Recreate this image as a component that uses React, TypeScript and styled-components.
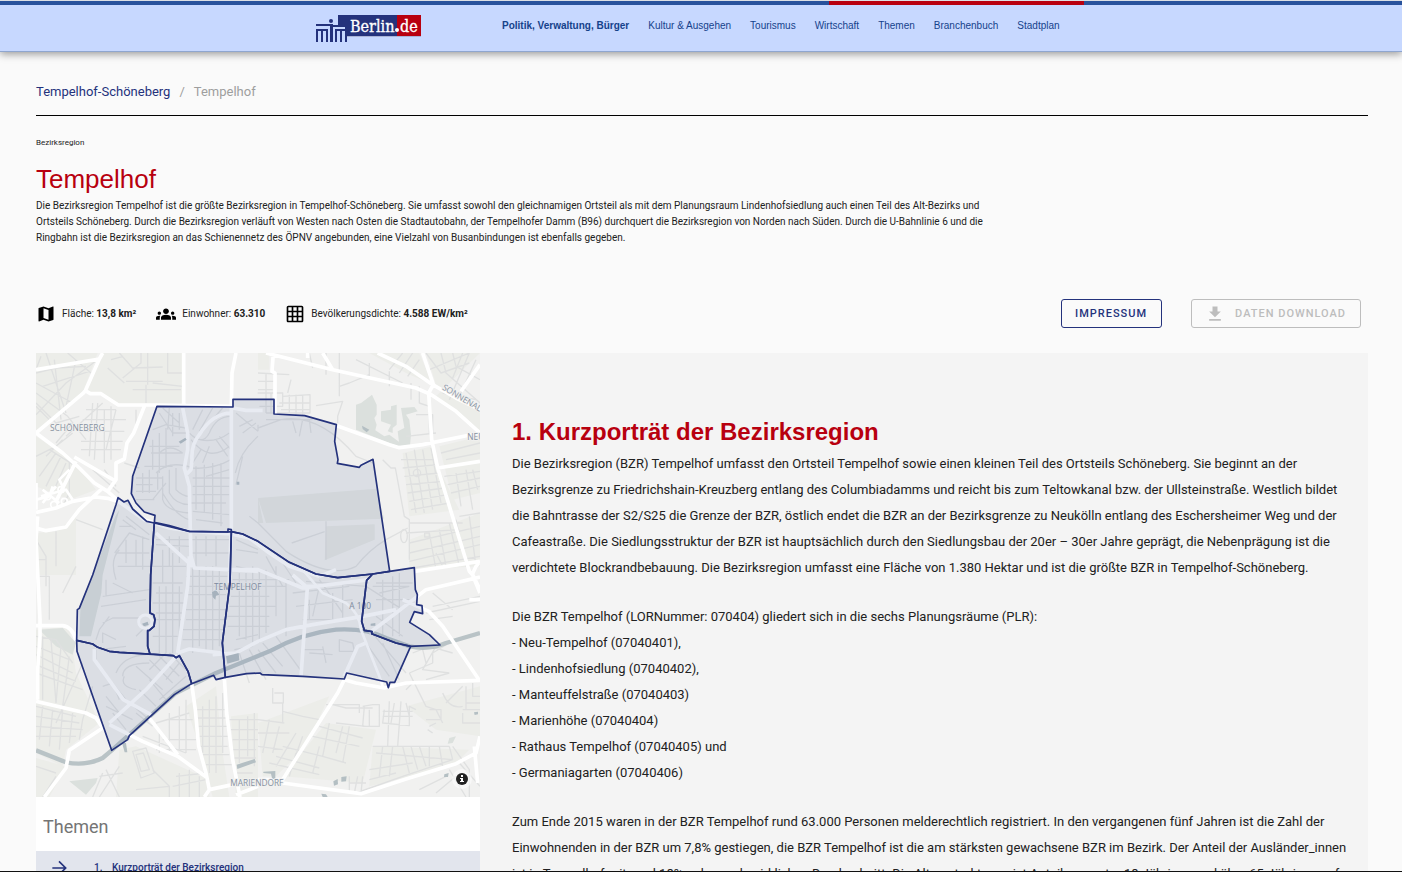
import React from 'react';
import styled, { createGlobalStyle } from 'styled-components';

const navy = '#24327c';
const red = '#b8000f';

const GlobalStyle = createGlobalStyle`
  *, *::before, *::after { box-sizing: border-box; }
  body {
    margin: 0;
    background: #fafafa;
    color: #212121;
    font-family: Roboto, 'Liberation Sans', sans-serif;
  }
  a { color: inherit; text-decoration: none; }
`;

const Page = styled.div`
  display: flex;
  flex-direction: column;
  height: 100vh;
  border-bottom: 1px solid #111;
`;

const Header = styled.header`
  flex: none;
  border-top: 1px solid #dcdfe4;
  border-bottom: 1px solid #8fa6cf;
  background: #c7d8ff;
  box-shadow: 0 2px 8px rgba(0, 0, 0, 0.4);
  z-index: 1;
`;

const Stripe = styled.div`
  height: 4px;
  background: #28529c;
`;

const HeaderInner = styled.div`
  display: flex;
  max-width: 770px;
  margin: 0 auto;
  padding-right: 2px;
`;

const StripeAccent = styled.div`
  width: 255px;
  height: 4px;
  margin-left: auto;
  background: ${red};
`;

const LogoLink = styled.a`
  display: block;
  flex: none;
  width: 106px;
  height: 46px;
  padding-top: 10px;
  svg { display: block; }
`;

const Nav = styled.nav`
  display: flex;
  gap: 19px;
  margin-left: 80px;
  padding-top: 14px;
  font: 10px/14px 'Liberation Sans', Arial, sans-serif;
  white-space: nowrap;
  color: #15428b;
`;

const NavLink = styled.a<{ $active?: boolean }>`
  font-weight: ${p => (p.$active ? 700 : 400)};
`;

const Scroller = styled.main`
  flex: 1;
  min-height: 0;
  overflow-y: auto;
  scrollbar-width: none;
  padding: 30px 34px 0 36px;
`;

const Breadcrumb = styled.nav`
  display: flex;
  gap: 9px;
  padding-bottom: 13px;
  border-bottom: 1px solid #000;
  font-size: 13px;
  line-height: 20px;
  color: #9e9e9e;
  a { color: ${navy}; }
`;

const Kicker = styled.p`
  margin: 20px 0 0;
  font-size: 8px;
  line-height: 14px;
`;

const Title = styled.h1`
  margin: 14px 0 0;
  font: 400 26px/30px 'Liberation Sans', Arial, sans-serif;
  color: ${red};
`;

const Intro = styled.p`
  max-width: 960px;
  margin: 4px 0 0;
  font-size: 10px;
  line-height: 16px;
`;

const FactsRow = styled.div`
  display: flex;
  align-items: center;
  margin-top: 53px;
  padding-right: 7px;
`;

const Facts = styled.ul`
  display: flex;
  flex: 1;
  gap: 20px;
  margin: 0;
  padding: 0;
  list-style: none;
  font-size: 10px;
  line-height: 20px;
`;

const Fact = styled.li`
  display: flex;
  align-items: center;
  gap: 6px;
  svg { fill: #000; }
`;

const OutlineButton = styled.button`
  display: flex;
  align-items: center;
  gap: 10px;
  height: 29px;
  margin-left: 29px;
  padding: 0 14px 0 13px;
  border: 1px solid ${navy};
  border-radius: 3px;
  background: transparent;
  color: ${navy};
  font: 500 11px/16px Roboto, sans-serif;
  letter-spacing: 1px;
  text-transform: uppercase;
  &:disabled { border-color: #bdbdbd; color: #bdbdbd; }
  svg { fill: currentColor; }
`;

const Columns = styled.div`
  display: grid;
  grid-template-columns: 1fr 2fr;
  margin-top: 25px;
  background: #f4f4f4;
`;

const Sidebar = styled.aside`
  background: #fff;
`;

const MapBox = styled.div`
  position: relative;
  aspect-ratio: 1;
  overflow: hidden;
  > svg { display: block; width: 100%; height: 100%; }
`;

const InfoButton = styled.button`
  position: absolute;
  right: 8px;
  bottom: 8px;
  width: 20px;
  height: 20px;
  padding: 4px;
  border: 0;
  border-radius: 10px;
  background: rgba(255, 255, 255, 0.5);
  svg { display: block; overflow: visible; }
`;

const SideTitle = styled.h2`
  margin: 0;
  padding: 18px 7px 12px;
  font-size: 18px;
  line-height: 24px;
  font-weight: 400;
  color: #757575;
`;

const TopicList = styled.ol`
  margin: 0;
  padding: 0;
  list-style: none;
`;

const Topic = styled.a`
  display: flex;
  align-items: center;
  height: 34px;
  padding-left: 13px;
  background: #e2e5ed;
  color: ${navy};
  font-size: 10px;
  line-height: 16px;
  font-weight: 500;
  svg { width: 20px; height: 20px; margin-right: 25px; fill: none; stroke: currentColor; stroke-width: 2; }
`;

const TopicNumber = styled.span`
  width: 18px;
`;

const Article = styled.article`
  padding: 64px 20px 64px 32px;
`;

const ArticleTitle = styled.h2`
  margin: 0 0 4px;
  font: 700 24px/30px 'Liberation Sans', Arial, sans-serif;
  color: ${red};
`;

const Paragraph = styled.p`
  margin: 0 0 23px;
  font-size: 13px;
  line-height: 26px;
`;

function BerlinLogo() {
  return (
    <svg width="106" height="28" viewBox="0 0 106 28" role="img" aria-label="Berlin.de">
      <path fill={navy} d="M22 0H82V21H31V12H22Z" />
      <path fill={red} d="M81 0H105V21H81Z" />
      <path stroke="#aab3d6" d="M31 21.500H105" />
      <circle cx="15" cy="6" r="2" fill={navy} />
      <path fill={navy} d="M0 9H17V11H0ZM0 14H12V16H0ZM0 16H2V27H0ZM5 16H7V27H5ZM10 16H12V27H10ZM14 11H17V27H14ZM17 10H31V12H17ZM19 14H31V16H19ZM19 16H21V27H19ZM24 16H26V27H24ZM29 12H31V27H29Z" />
      <g fill="#fff" stroke="#fff" strokeWidth="0.300" fontFamily="'DejaVu Serif Condensed', 'DejaVu Serif', serif" fontSize="16">
        <text x="34" y="17">Berlin</text>
        <text x="84" y="17">de</text>
      </g>
      <circle cx="81" cy="15" r="2" fill="#fff" />
    </svg>
  );
}

const blocks = [
  'M0 0H185L140 120L10 235L0 230Z',
  'M200 0H290L230 70L270 0H440V155H250L190 125L150 112Z',
  'M0 250L90 310L130 345L180 410L100 440L0 400Z',
  'M666 0H700V50H666Z',
  'M1000 0H1150L1190 95L1110 60Z M1170 0H1332V180L1200 95Z',
  'M1200 130L1332 240V0Z M1100 300L1190 280L1210 350L1270 470L1120 490Z',
  'M1210 280L1332 250V420L1250 440Z',
  'M1120 560L1332 480V640L1120 650Z',
  'M0 540L60 535L120 490V666H0Z',
  'M0 830L100 820L120 960L190 1110L90 1190L80 1240L0 1200Z',
  'M450 1060L540 1000L560 1200L580 1332H530L510 1260L490 1180Z',
  'M585 1090L666 1080V1332H600Z M666 1110L880 1030L810 1180L720 1270H680Z',
  'M870 1110L1020 1130L980 1290L740 1270Z',
  'M1010 1180L1300 1190L1250 1240L1000 1300Z',
  'M0 1215L90 1240L40 1332H0Z M250 1190L300 1180L520 1280V1332H240Z',
  'M1110 1060L1332 1000V1150L1200 1130Z',
];

const parks = [
  'M960 155L975 150L1008 125L1022 155V185L1015 195L1022 215L1018 232L1045 250L1060 245L1105 278L1085 280L960 230Z',
  'M1035 175L1065 170V160L1082 155V215L1070 225V240L1055 235L1065 215L1035 205Z',
  'M1095 165L1135 162L1145 175L1110 185L1120 200L1125 245L1122 278L1090 275L1085 235L1105 225Z',
  'M238 490L250 470L200 666L196 720L165 850H130L134 750L170 666Z',
  'M10 830L80 825L120 870L110 905L60 880Z',
  'M100 1285L185 1275L180 1290L150 1325Z',
  'M1240 1155L1260 1150L1250 1170L1235 1172Z',
];

const meadows = [
  'M666 435L1020 407L1045 497L690 510Z',
  'M666 433V510H682Z',
  'M870 520L1016 514V560L866 622Z',
];

const buildings = [
  'M428 266L448 254L452 260L434 272Z',
  'M570 910L608 900L610 922L574 932Z',
  'M602 1235L656 1218L660 1228L604 1248Z',
  'M258 1170H270L274 1198H266Z',
  'M528 718L540 710L550 725L540 728L538 740L530 732Z',
  'M318 812L335 806L338 816L324 820Z',
  'M602 386H610V395H602Z',
  'M978 218L1000 230L992 238L980 228Z',
  'M892 1285L905 1278L906 1294L894 1298ZM916 1272L932 1270L930 1285L916 1286Z',
  'M1225 1264L1238 1260L1236 1272L1224 1272ZM1314 1078L1326 1076V1084L1316 1086ZM1004 812L1018 810V818L1004 818Z',
  'M682 1256L718 1254V1280L708 1276L705 1262L682 1260Z',
  'M856 1322L870 1324L875 1332H860Z',
];

const minorRoads = [
  // Schöneberg
  'M30 0L90 180M95 0L165 60M0 90L110 150M0 120L95 190M0 60L60 45L150 40M55 20L75 200M120 20L90 160M0 150L60 210L130 190M20 100L160 55M0 185L90 90L185 20M40 200L0 160M15 10L0 50',
  'M225 20L262 10M215 45L265 90M250 0L290 45L380 42M260 75L315 30V0M270 85H380M335 0V95M350 90L440 100M395 0V60H440M290 110H435M330 95V150',
  'M170 150L160 310M185 150L175 320M205 170V330M225 160V320M150 170H240M140 200H270M140 235H265M135 265H260M135 290H255M200 150L90 250M240 170L210 290M110 210L60 270M95 190L150 260M80 260L30 310M0 310L60 280L110 240',
  'M265 330L310 345M300 170V230M40 290L120 340M170 350L250 420M205 350L240 400M60 300L10 370M75 310L30 400M90 330L50 420M105 345L70 430M100 320V420L80 460',
  // Neu-Tempelhof
  'M300 375H380M300 395H350M300 415H360M320 360V420M340 350V420M365 355V410M300 440H355M325 340H410M340 280H430M345 300H440M350 260V350M370 240V360M390 225V345M410 180V250M430 180V230M370 180L410 240L450 240M380 165L430 210M400 165L395 230M350 230L390 215L450 225',
  'M360 360Q400 320 470 345Q530 350 585 320M380 370V440Q390 475 460 480M400 350V420Q420 455 460 455M420 345V410Q440 430 460 430M480 340V470M505 335V480M530 330V500M555 330V520M470 375H585M470 400H580M470 425H580M465 450H570M470 475L580 485M480 500L560 510',
  'M460 240Q500 280 520 240Q540 190 585 190M465 260Q520 330 580 280M490 260Q540 270 580 240M500 170L470 230M530 165L490 235M560 165L520 210M540 260L575 310M495 290L470 330M520 280L500 330M550 250L585 290M370 300Q400 270 440 300M380 420Q420 490 460 500M390 390L350 440M510 370L580 350',
  // Tempelhofer Feld
  'M666 225L735 200Q850 180 960 310L1011 330M640 490L666 510L750 595Q880 680 960 640Q1000 590 1050 560L1115 525M767 570L866 536M870 505V620M598 360Q610 300 666 250M600 395L620 310M666 235V215M770 205L780 240M800 200L790 250M820 200L825 240M690 200H830M600 180L666 235M610 220L650 200M620 240L660 210',
  'M665 120H740V160H670M690 120V180M705 120V180M720 130V170M740 130L822 125V180H690M760 125V180M780 125V185M800 125V185M730 150H820M735 170H820M840 158L920 145L905 190V210M910 0V130M910 100L940 90L1000 65M765 80L755 120M666 60L760 65M666 85H715M666 110H710M690 60V120',
  // Neukölln
  'M820 0L830 45M870 0V65M960 20L1100 90M1000 30V70M1060 55V100M1100 0L1060 50M1130 0L1090 60M1150 20L1115 70M1170 0L1215 60L1300 30M1215 0L1230 60L1332 150M1250 0L1260 40L1332 80M1280 0L1250 75M1300 0L1240 140M1320 20L1270 130M1180 50L1300 0M1220 120L1320 140M1125 90V140M1150 100V150L1180 160V240M1140 185H1190V240M1110 250L1200 240',
  'M1095 320H1200M1100 345L1205 335M1105 370L1210 360M1110 395L1220 385M1115 420L1225 405M1120 445L1235 425M1125 470L1240 450M1110 300L1140 480M1135 290L1165 480M1160 290L1190 470M1185 285L1215 450M1040 320L1065 345H1078L1105 490L1120 500V620',
  'M1215 300L1332 270M1230 320L1332 300M1225 370L1332 355M1235 395L1332 375M1245 420L1332 400M1260 360L1275 460M1290 350L1310 470M1310 350L1325 410M1120 510H1280M1110 540L1270 530M1120 570L1332 520M1120 600L1332 550M1120 625L1332 575M1130 645L1332 610M1240 510L1270 640M1260 500L1290 640M1300 490L1320 640M1180 540L1200 650M1210 530L1230 640M1270 490L1332 480M1200 600L1220 640',
  // Tempelhof centre
  'M360 560H580M360 575L460 580M400 550V640M430 550V630M480 550V640M510 550V610M540 550V640M460 600H580M380 590V690M410 600V700M350 640H450M350 690H440M360 720H440M350 750H445M360 780H440M345 800H435M350 850H425M370 700V900M390 700V900M410 690V900M430 700V870M470 640V900M490 650V880M510 640V900M530 640V890M550 650V880M450 670H575M450 700H575M450 725H570M450 770H570M450 800H565M440 830H565M440 860H560',
  'M600 560L666 590M600 590L666 600M600 640L666 655M590 680H760M590 700H750M585 730H700M580 760H720M575 790H700M575 820H700M610 660V850M630 660V860M650 640V880M670 650V870M690 650V840M720 640V790M750 680V850M600 860L666 845M595 890L650 880M610 900L640 990M640 890L690 980M666 890L720 960M680 870L740 940M720 850L800 960M690 610L740 700M720 600L780 690',
  'M800 890H860M820 900L890 905M910 860V895H955L950 870ZM860 880L870 930M800 800H920M850 700L830 790M890 720V810M780 760L950 740M770 720L940 700M820 740V800M810 685L990 700M920 690V800M850 680L920 780M990 700L1100 770M1010 700H1120M1020 740H1120M1040 680V850M1070 670V850M1090 660V850M1020 790L1100 850M1000 830L1110 960M1040 870L1090 980M990 870L1060 970M1020 690H1130M1030 720L1120 700',
  // West
  'M236 600L280 540L340 560M240 680Q220 620 250 590M240 600H340M245 640H345M260 500L300 530M270 490L340 545M250 520H290M270 560V630M300 560V640M320 550V650M200 810L230 795H310M210 680V730M180 860L190 830L220 790M195 760L330 740M200 730L340 710M230 690L290 720M200 870V840L240 860M190 890L270 880M300 850L330 820',
  'M180 890V930L270 1040L340 1100M200 1000L230 990L250 1040M210 1030L250 1080M240 960Q260 910 330 905M260 970Q260 930 340 930M265 970Q250 1000 300 1010M300 940L380 1010M340 920L410 990M370 910L430 970M400 900L450 950M310 1010L360 1060M340 980L390 1040M230 1080L270 1130M210 1060L290 1100M390 900L340 950M430 930L390 980M450 970L370 1040M300 1080L350 1120',
  // South-west
  'M0 560L30 610V700M10 670H40V800M60 535V640M0 620H30M120 500L200 530M120 640L80 720M0 850L60 860L110 930M0 880L100 920M0 905L110 960M0 935L120 985M0 960L140 1010M20 850V1040M45 860L60 1050M75 880L60 1050M100 910L80 1060M0 1060L120 1090M0 1090L130 1110M0 1120L140 1130M20 1060L10 1160M50 1070L40 1180M80 1070L70 1190M110 1080L100 1170M140 1100L130 1160M0 1150H120M140 930L60 1110M170 1000L140 1100M0 1240L60 1260M20 1332L60 1270M190 1332L250 1240M190 1270L260 1260M210 1250L250 1332M170 1332L200 1260',
  'M290 1195L330 1185L355 1260L315 1275ZM300 1205L322 1200L340 1250L315 1255ZM360 1110L460 1080M360 1190H480M320 1150L450 1200M370 1130V1200M400 1080V1200M430 1060V1190M450 1040V1200M470 1100H400M380 1160H480M420 1270L510 1260M410 1300L510 1280M430 1260V1332M460 1250V1332M490 1270V1332M350 1250L400 1300V1332M300 1310L400 1300',
  // Mariendorf
  'M480 1070H570M480 1095H570M485 1120H575M490 1150H575M495 1180H575M500 1205H580M510 1235H590M500 1060V1200M520 1040V1260M540 1030V1260M560 1020V1200M580 1100H666M585 1130H666M590 1160H666M590 1190H660M595 1215H660M610 1100V1230M635 1090V1210M655 1080V1240M600 1260H650M610 1290H660',
  'M710 1005V1050H742V1020H715M666 1100L745 1110M740 1050V1110M740 1075L800 1090L850 1100M870 1055H970V1080M890 1055L930 1065H1010M980 1060L1010 1055H1030V1120H980L985 1060M1000 1070V1120M1045 1070L1040 1110L1120 1118V1060L1140 1070M1060 1045L1055 1180M1075 1050L1065 1110M1095 1045L1085 1180M1110 1050L1120 1090M1040 1075H1130M1040 1090H1130',
  'M900 1110L990 1120M850 1120L980 1155M830 1150L970 1180M880 1110L860 1210L930 1230M920 1120L900 1200M940 1120L920 1230M780 1140L720 1240M800 1150L760 1260M740 1180L860 1210M720 1210L850 1245M700 1230L850 1265M666 1140H760M666 1180L740 1190M700 1100L680 1200M730 1120L710 1200M850 1180L830 1260M780 1200L760 1270',
  'M1010 1180H1240M1020 1200L1250 1220M1040 1180L1030 1270M1070 1180L1060 1270M1100 1180L1120 1260M1125 1180L1145 1250M1150 1180L1170 1240M1180 1180V1240M1210 1180L1220 1240M1240 1180L1250 1220M960 1320L1100 1270L1250 1220M1000 1250L1130 1230M1000 1280L1080 1260M940 1270V1320M965 1270L955 1320M980 1270L975 1320M940 1290H990',
  'M1120 960L1170 1060L1200 1070L1220 1110M1120 960L1190 930V900L1240 870M1170 980L1240 960M1200 880L1160 950L1240 960M1130 990L1110 1010M1180 1070H1215V1100H1170M1180 1120L1200 1110M1175 1130L1190 1140M1220 1020Q1240 1070 1280 1060M1230 1050L1280 1000M1290 1000V1070M1310 990V1030H1332M1280 1070H1332M1280 1080V1110H1332M1290 1050H1332M1130 900L1180 880L1250 900M1160 890L1170 930M1190 760L1332 730M1170 780L1332 745M1180 800L1250 790M1190 720L1250 770M1250 1180L1300 1250V1332M1270 1230L1332 1300M1200 1320L1260 1270M1240 1250L1290 1332M1150 1310L1230 1270',
];

const majorRoads = [
  'M0 50L190 18L200 0M190 18L148 113L140 122L0 240L80 300L130 345L175 390L215 415L250 447',
  'M148 113L163 122H195L247 156H363L591 160M325 160L293 240L273 270L265 318L240 330V380L215 415M115 312L235 382M120 325L60 445M443 0V160',
  'M0 478L60 465L110 445L180 432L215 436L250 447L325 500L400 525L470 535L585 543L640 555L700 600L760 640L850 670',
  'M0 525L30 533L90 522L130 470L200 405M0 390V470M5 490L0 560L12 800V850L5 950V1040M0 818H80Q110 822 120 862',
  'M600 0L588 60L586 162V530M712 0L708 55L717 60V183M591 165L630 172H680',
  'M690 0L890 50L1140 105L1185 125M815 15V0M890 50L860 0M1025 0L1110 40L1190 95L1260 135L1332 170M1160 0L1192 95L1178 120L1187 260L1205 345L1300 655L1310 666L1332 720',
  'M1178 120L1260 175L1332 240M903 218L1060 275L1090 284L1160 275L1332 240M1275 115L1332 35M1205 345L1332 325M1135 655L1332 625M1308 666L1320 640L1332 625',
  'M440 165L455 240V290L445 345L460 400L463 535L465 610L475 645L580 650M586 180Q530 180 490 245Q465 275 468 320L465 350L450 365M360 540L470 640M460 610L455 700L425 900',
  'M586 650H666L800 705L1000 680M475 645L666 655M850 670L900 650M770 666L810 700H850M814 705L795 970M530 905L600 900L666 865L750 830L830 815L980 790L1080 770M425 900L460 888L555 900M585 540L580 690',
  'M220 1110L330 1010L425 905M175 888V920L262 1040L345 1085M340 1095L425 1205M220 1115L320 1165L425 1210L515 1275M467 992L478 1070L488 1180L510 1260L520 1310L505 1332M520 1310L590 1295M565 975L572 1080L590 1220L612 1332M600 1325L640 1310L666 1300',
  'M0 1045L150 1080L180 1095L200 1125L100 1192L90 1245L25 1332',
  'M1332 985L1220 820L1180 776L1100 740M1000 840L1080 780L1170 710L1332 672M925 980L960 990L1045 1005L1110 990L1332 982M925 980L905 1020L740 1280H666M740 1290L975 1322L1110 1278L1260 1232L1320 1200L1332 1150M925 970L965 880L990 870M1315 1180L1325 1290M1300 740H1332M1310 665L1332 710',
];

const railway = [
  'M800 650L860 720L930 750Q970 780 975 830L1030 970L1040 1000',
  'M15 430L90 410L110 440M20 410L70 450M0 440L40 430L50 400M80 400L70 380L100 350M20 450L60 400',
];

const districts = [
  'M363 160L591 162V139H714V183L806 188L901 215L896 265L906 320L904 331L970 343L975 337L1011 319L1061 655L1010 663L905 674L840 663L760 628L666 565L620 543L586 536V530L576 528V537L460 535L400 518L355 508L357 487L325 477L300 450L286 422L290 370Z',
  'M246 434L264 447L276 442L290 468L332 505L355 510L344 666L342 780L353 785L357 800L354 820L340 832L335 833V880L342 903L250 898L220 895L185 883L170 873L122 862L124 770L130 766L170 666L240 455Z',
  'M355 510L460 535L576 537L586 536L582 690L559 870L568 973L540 980L533 967L467 992L456 955L430 908L420 914L412 908L342 903L335 880V833L340 832L354 820L357 800L353 785L342 780L344 666Z',
  'M122 862L170 873L185 883L220 895L250 898L412 908L420 914L430 908L456 955L467 992L415 1025L280 1148L275 1160L227 1192L123 895Z',
  'M586 536L620 543L666 565L760 628L840 663L905 674L1010 663L992 682L977 805L985 832L1008 836L1007 842L1080 870L1124 880L1076 988H1062L1057 1004L1052 987L932 960L925 978L800 970L678 965L672 960L632 962L568 973L559 870L582 690Z',
  'M1010 663L1061 655L1135 644L1138 710L1144 725L1142 755L1158 758L1160 782L1135 776L1121 808L1180 845L1212 876L1124 880L1080 870L1007 842L1008 836L985 832L977 805L992 682Z',
];

function DistrictMap() {
  return (
    <svg viewBox="0 0 1332 1332" role="img" aria-label="Karte der Bezirksregion Tempelhof">
      <rect width="1332" height="1332" fill="#f1f1f0" />
      <path d={blocks.join('')} fill="#ecede9" />
      <path d={parks.join('')} fill="#dbe0dd" />
      <path d={meadows.join('')} fill="#e6e8e4" />
      <g fill="none" strokeLinejoin="round">
        <path d={minorRoads.join('')} stroke="#dfe0e0" strokeWidth="4" />
        <path d="M0 1055M0 1192L90 1228Q150 1240 200 1215L227 1192L420 1020L540 960L700 895Q800 840 900 830Q990 825 1050 855L1120 880Q1180 892 1230 870L1332 840" stroke="#b9c3c6" strokeWidth="13" />
        <path d={majorRoads.join('')} stroke="#fff" strokeWidth="11" />
        <path d={railway.join('')} stroke="#fff" strokeWidth="8" />
        <circle cx="328" cy="806" r="20" stroke="#fff" strokeWidth="9" />
        <g stroke="#fff" strokeWidth="5">
          <circle cx="54" cy="455" r="10" />
          <circle cx="85" cy="445" r="9" />
          <circle cx="75" cy="410" r="9" />
          <circle cx="35" cy="430" r="10" />
        </g>
        <g stroke="#dfe0e0" strokeWidth="4">
          <circle cx="1143" cy="360" r="11" />
          <ellipse cx="1104" cy="549" rx="10" ry="20" />
          <rect x="1166" y="540" width="14" height="12" />
        </g>
      </g>
      <path d={buildings.join('')} fill="#b4bfc3" />
      <g fontFamily="'Open Sans', 'Noto Sans', sans-serif" fontSize="25" fill="#8791a0" stroke="#f1f1f0" strokeWidth="4" paintOrder="stroke">
        <text x="42" y="235">SCHÖNEBERG</text>
        <text x="534" y="712">TEMPELHOF</text>
        <text x="583" y="1299">MARIENDORF</text>
        <text x="1294" y="261">NEUKÖLLN</text>
        <text x="940" y="769">A 100</text>
        <text transform="translate(1217 108) rotate(31)">SONNENALLEE</text>
      </g>
      <g fill="#425b94" fillOpacity="0.12" stroke={navy} strokeWidth="5" strokeLinejoin="round">
        {districts.map(d => <path key={d} d={d} />)}
      </g>
    </svg>
  );
}

const navItems = ['Politik, Verwaltung, Bürger', 'Kultur & Ausgehen', 'Tourismus', 'Wirtschaft', 'Themen', 'Branchenbuch', 'Stadtplan'];

const facts = [
  { label: 'Fläche', value: '13,8 km²', icon: 'M20.500 3l-.16.03L15 5.100 9 3 3.360 4.900c-.21.07-.36.25-.36.48V20.500c0 .28.22.5.5.5l.16-.03L9 18.900l6 2.100 5.640-1.900c.21-.07.36-.25.36-.48V3.500c0-.28-.22-.5-.5-.5zM15 19l-6-2.110V5l6 2.110V19z' },
  { label: 'Einwohner', value: '63.310', icon: 'M12 12.750c1.630 0 3.070.39 4.240.9 1.080.48 1.760 1.560 1.760 2.730V19H6v-2.610c0-1.180.68-2.260 1.760-2.730 1.170-.52 2.610-.91 4.240-.91zM4 13c1.100 0 2-.9 2-2s-.9-2-2-2-2 .9-2 2 .9 2 2 2zm1.130 1.100C4.760 14.040 4.390 14 4 14c-.99 0-1.930.21-2.780.58C.48 14.900 0 15.620 0 16.430V19h4.500v-2.610c0-.83.23-1.610.63-2.290zM20 13c1.100 0 2-.9 2-2s-.9-2-2-2-2 .9-2 2 .9 2 2 2zm4 3.430c0-.81-.48-1.530-1.220-1.850-.85-.37-1.790-.58-2.780-.58-.39 0-.76.04-1.130.1.400.68.63 1.460.63 2.290V19H24v-2.570zM12 5.500c1.900 0 3.500 1.500 3.500 3.300S13.900 12 12 12s-3.500-1.400-3.500-3.200S10.100 5.500 12 5.500z' },
  { label: 'Bevölkerungsdichte', value: '4.588 EW/km²', icon: 'M20 2H4c-1.100 0-2 .9-2 2v16c0 1.100.9 2 2 2h16c1.100 0 2-.9 2-2V4c0-1.100-.9-2-2-2zM8 20H4v-4h4v4zm0-6H4v-4h4v4zm0-6H4V4h4v4zm6 12h-4v-4h4v4zm0-6h-4v-4h4v4zm0-6h-4V4h4v4zm6 12h-4v-4h4v4zm0-6h-4v-4h4v4zm0-6h-4V4h4v4z' },
];

export default function App() {
  return (
    <Page>
      <GlobalStyle />
      <Header>
        <Stripe>
          <HeaderInner><StripeAccent /></HeaderInner>
        </Stripe>
        <HeaderInner>
          <LogoLink href="#start"><BerlinLogo /></LogoLink>
          <Nav>
            {navItems.map((item, i) => <NavLink key={item} href="#nav" $active={i === 0}>{item}</NavLink>)}
          </Nav>
        </HeaderInner>
      </Header>
      <Scroller>
        <Breadcrumb>
          <a href="#bezirk">Tempelhof-Schöneberg</a>
          <span>/</span>
          <span>Tempelhof</span>
        </Breadcrumb>
        <Kicker>Bezirksregion</Kicker>
        <Title>Tempelhof</Title>
        <Intro>
          Die Bezirksregion Tempelhof ist die größte Bezirksregion in Tempelhof-Schöneberg. Sie umfasst sowohl den gleichnamigen Ortsteil als mit dem Planungsraum Lindenhofsiedlung auch einen Teil des Alt-Bezirks und Ortsteils Schöneberg. Durch die Bezirksregion verläuft von Westen nach Osten die Stadtautobahn, der Tempelhofer Damm (B96) durchquert die Bezirksregion von Norden nach Süden. Durch die U-Bahnlinie 6 und die Ringbahn ist die Bezirksregion an das Schienennetz des ÖPNV angebunden, eine Vielzahl von Busanbindungen ist ebenfalls gegeben.
        </Intro>
        <FactsRow>
          <Facts>
            {facts.map(f => (
              <Fact key={f.label}>
                <svg width="20" height="20" viewBox="0 0 24 24"><path d={f.icon} /></svg>
                <span>{f.label}: <b>{f.value}</b></span>
              </Fact>
            ))}
          </Facts>
          <OutlineButton>Impressum</OutlineButton>
          <OutlineButton disabled>
            <svg width="20" height="20" viewBox="0 0 24 24"><path d="M19 9h-4V3H9v6H5l7 7 7-7zM5 18v2h14v-2H5z" /></svg>
            Daten Download
          </OutlineButton>
        </FactsRow>
        <Columns>
          <Sidebar>
            <MapBox>
              <DistrictMap />
              <InfoButton aria-label="Karteninformation">
                <svg width="12" height="12" viewBox="0 0 12 12">
                  <circle cx="6" cy="6" r="6" fill="#222" />
                  <path d="M5 2H7V4H5ZM4 5H7V8H8V9H4V8H5V6H4Z" fill="#fff" />
                </svg>
              </InfoButton>
            </MapBox>
            <SideTitle>Themen</SideTitle>
            <TopicList>
              <li>
                <Topic href="#kurzportraet">
                  <svg viewBox="0 0 24 24"><path d="M4 12H20M12 4L20 12L12 20" /></svg>
                  <TopicNumber>1.</TopicNumber>
                  Kurzporträt der Bezirksregion
                </Topic>
              </li>
            </TopicList>
          </Sidebar>
          <Article id="kurzportraet">
            <ArticleTitle>1. Kurzporträt der Bezirksregion</ArticleTitle>
            <Paragraph>
              Die Bezirksregion (BZR) Tempelhof umfasst den Ortsteil Tempelhof sowie einen kleinen Teil des Ortsteils Schöneberg. Sie beginnt an der Bezirksgrenze zu Friedrichshain-Kreuzberg entlang des Columbiadamms und reicht bis zum Teltowkanal bzw. der Ullsteinstraße. Westlich bildet die Bahntrasse der S2/S25 die Grenze der BZR, östlich endet die BZR an der Bezirksgrenze zu Neukölln entlang des Eschersheimer Weg und der Cafeastraße. Die Siedlungsstruktur der BZR ist hauptsächlich durch den Siedlungsbau der 20er – 30er Jahre geprägt, die Nebenprägung ist die verdichtete Blockrandbebauung. Die Bezirksregion umfasst eine Fläche von 1.380 Hektar und ist die größte BZR in Tempelhof-Schöneberg.
            </Paragraph>
            <Paragraph>
              Die BZR Tempelhof (LORNummer: 070404) gliedert sich in die sechs Planungsräume (PLR):<br />
              - Neu-Tempelhof (07040401),<br />
              - Lindenhofsiedlung (07040402),<br />
              - Manteuffelstraße (07040403)<br />
              - Marienhöhe (07040404)<br />
              - Rathaus Tempelhof (07040405) und<br />
              - Germaniagarten (07040406)
            </Paragraph>
            <Paragraph>
              Zum Ende 2015 waren in der BZR Tempelhof rund 63.000 Personen melderechtlich registriert. In den vergangenen fünf Jahren ist die Zahl der Einwohnenden in der BZR um 7,8% gestiegen, die BZR Tempelhof ist die am stärksten gewachsene BZR im Bezirk. Der Anteil der Ausländer_innen ist in Tempelhof mit rund 18% nahe am bezirklichen Durchschnitt. Die Altersstruktur weist Anteile an unter 18 Jährigen und über 65 Jährigen auf,
            </Paragraph>
          </Article>
        </Columns>
      </Scroller>
    </Page>
  );
}
